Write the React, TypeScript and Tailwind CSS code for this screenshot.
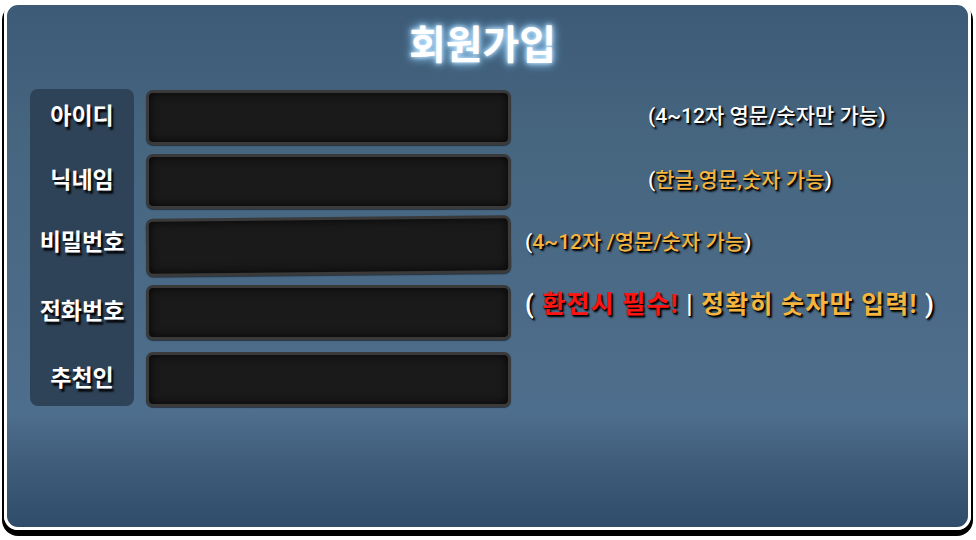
import * as React from "react"

const rows = [
  { label: "아이디", h: "h-[64px]" },
  { label: "닉네임", h: "h-[62px]" },
  { label: "비밀번호", h: "h-[69px]" },
  { label: "전화번호", h: "h-[67px]" },
  { label: "추천인", h: "h-[55px]" },
]

const fontKr = "font-['Roboto','Noto_Sans_CJK_KR',sans-serif]"
const shadow = "[text-shadow:2px_2px_2px_#000,1px_1px_1px_#000]"

function Hint({ index }: { index: number }) {
  if (index === 0)
    return (
      <span className={`ml-[123px] text-[21px] font-medium text-white ${shadow}`}>
        (4~12자 영문/숫자만 가능)
      </span>
    )
  if (index === 1)
    return (
      <span className={`ml-[123px] text-[21px] font-medium text-[#f5b53f] ${shadow}`}>
        <span className="text-white">(</span>한글,영문,숫자 가능
        <span className="text-white">)</span>
      </span>
    )
  if (index === 2)
    return (
      <span className={`text-[21px] font-medium text-[#f5b53f] ${shadow}`}>
        <span className="text-white">(</span>4~12자 /영문/숫자 가능
        <span className="text-white">)</span>
      </span>
    )
  if (index === 3)
    return (
      <span
        className={`-mt-[14px] text-[25px] font-bold tracking-[1.2px] text-white ${shadow}`}
      >
        ( <span className="text-[#ff1414]">환전시 필수!</span> | {" "}
        <span className="text-[#f5b53f]">정확히 숫자만 입력!</span> )
      </span>
    )
  return null
}

export default function App() {
  return (
    <div className={`h-[540px] w-[976px] bg-white pt-[2px] pl-[4px] ${fontKr}`}>
      <div className="flex h-[528px] w-[967px] flex-col rounded-[14px] border-[3px] border-white bg-[linear-gradient(180deg,#3d5a76_0%,#46657f_25%,#4e6e8d_78%,#3f5d7b_88%,#2f4c6a_100%)] shadow-[0_4px_0_2px_#000]">
        <div className="flex h-[84px] justify-center pt-[21px] pr-[10px]">
          <h1 className="text-[40px] leading-none font-bold text-white [text-shadow:0_0_4px_#d8f0ff,0_0_8px_#9fd4ff,0_0_12px_#6fb4e8]">
            회원가입
          </h1>
        </div>

        <div className="ml-[23px] grid grid-cols-[104px_377px_1fr]">
          <div className="col-start-1 row-span-5 row-start-1 rounded-[8px] bg-[#2f4358]" />
          {rows.map((r, i) => (
            <React.Fragment key={r.label}>
              <div
                className={`col-start-1 flex ${r.h} items-start justify-center`}
                style={{ gridRowStart: i + 1 }}
              >
                <span className="flex h-[56px] items-center text-[23px] font-bold text-white [text-shadow:2px_3px_2px_#000]">
                  {r.label}
                </span>
              </div>
              <div
                className={`col-start-2 pl-[12px] ${r.h} pt-[1px]`}
                style={{ gridRowStart: i + 1 }}
              >
                <div
                  className={`w-[365px] rounded-[7px] border-[3px] border-[#3a3a3a] bg-[#1a1a1a] shadow-[inset_0_0_10px_#050505,0_1px_1px_rgba(0,0,0,0.5)] ${
                    i === 2 ? "mt-[1px] h-[58px] -rotate-[0.55deg]" : "h-[55px]"
                  }`}
                />
              </div>
              <div
                className={`col-start-3 pl-[14px] flex ${r.h} items-start`}
                style={{ gridRowStart: i + 1 }}
              >
                <div className="flex h-[56px] items-center whitespace-nowrap">
                  <Hint index={i} />
                </div>
              </div>
            </React.Fragment>
          ))}
        </div>
      </div>
    </div>
  )
}
